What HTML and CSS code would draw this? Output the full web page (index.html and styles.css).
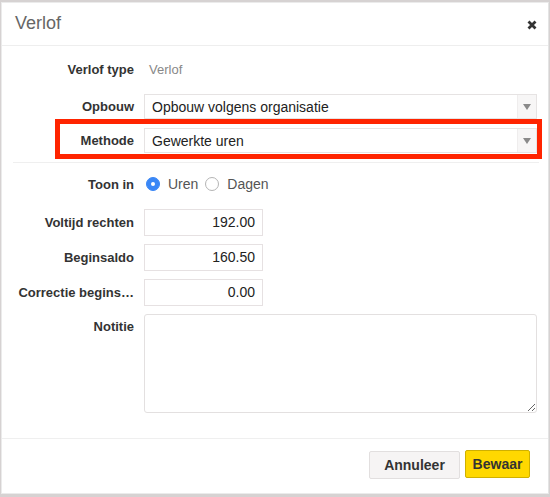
FILE: index.html
```html
<!DOCTYPE html>
<html>
<head>
<meta charset="utf-8">
<link rel="stylesheet" href="styles.css">
</head>
<body>
<div class="modal">
  <div class="header">
    <span class="title">Verlof</span>
    <svg class="close" width="10" height="10" viewBox="0 0 10 10"><path d="M1.5 1.5 L8.5 8.5 M8.5 1.5 L1.5 8.5" stroke="#333" stroke-width="2.8" stroke-linecap="butt"/></svg>
  </div>
  <div class="body">
    <div class="row r-type">
      <div class="label">Verlof type</div>
      <div class="value">Verlof</div>
    </div>
    <div class="row r-opbouw">
      <div class="label">Opbouw</div>
      <div class="select"><span class="sel-text">Opbouw volgens organisatie</span><span class="arrow"><span class="tri"></span></span></div>
    </div>
    <div class="row r-methode">
      <div class="label">Methode</div>
      <div class="select"><span class="sel-text">Gewerkte uren</span><span class="arrow"><span class="tri"></span></span></div>
    </div>
    <div class="sep"></div>
    <div class="row r-toon">
      <div class="label">Toon in</div>
      <div class="radios">
        <span class="radio checked"></span><span class="rlabel">Uren</span>
        <span class="radio"></span><span class="rlabel">Dagen</span>
      </div>
    </div>
    <div class="row r-num first">
      <div class="label">Voltijd rechten</div>
      <div class="input">192.00</div>
    </div>
    <div class="row r-num">
      <div class="label">Beginsaldo</div>
      <div class="input">160.50</div>
    </div>
    <div class="row r-num">
      <div class="label" title="Correctie beginsaldo">Correctie begins…</div>
      <div class="input">0.00</div>
    </div>
    <div class="row r-note">
      <div class="label">Notitie</div>
      <textarea class="textarea"></textarea>
    </div>
  </div>
  <div class="footer">
    <button class="btn cancel">Annuleer</button>
    <button class="btn save">Bewaar</button>
  </div>
  <div class="highlight"></div>
</div>
</body>
</html>
```
FILE: styles.css
```css
html, body {
  margin: 0;
  padding: 0;
}
body {
  background: #d6d2d2;
  width: 550px;
  height: 497px;
  overflow: hidden;
  font-family: "Liberation Sans", Arial, sans-serif;
  color: #333;
}
.modal {
  position: relative;
  box-sizing: border-box;
  width: 548px;
  height: 492px;
  margin: 2px 0 0 1px;
  background: #fff;
  border: 1px solid #ebebeb;
  border-right-color: #e4e4e4;
}
.header {
  height: 42px;
  border-bottom: 1px solid #eeeeee;
  display: flex;
  align-items: center;
  justify-content: space-between;
  padding: 0 11px 0 13px;
}
.title {
  font-size: 18px;
  color: #666;
  margin-top: -1px;
}
.close {
  display: block;
  margin-top: 1px;
}
.body {
  padding: 10px 11px 25px 15px;
}
.row {
  display: flex;
  align-items: center;
}
.label {
  width: 117px;
  flex: none;
  text-align: right;
  font-weight: bold;
  font-size: 13px;
  color: #333;
  margin-right: 10px;
  line-height: 25px;
  white-space: nowrap;
}
.r-type {
  height: 27px;
}
.value {
  font-size: 13px;
  color: #888;
  padding-left: 5px;
}
.r-opbouw {
  margin-top: 11px;
  height: 25px;
}
.r-methode {
  margin-top: 9px;
  height: 25px;
}
.select {
  flex: 1;
  height: 25px;
  box-sizing: border-box;
  border: 1px solid #e6e3e3;
  display: flex;
  align-items: center;
  background: #fff;
}
.sel-text {
  flex: 1;
  font-size: 14px;
  color: #222;
  padding-left: 7px;
}
.arrow {
  width: 18px;
  height: 100%;
  background: #f7f6f6;
  border-left: 1px solid #efeded;
  display: flex;
  align-items: center;
  justify-content: center;
}
.tri {
  width: 0;
  height: 0;
  border-left: 4px solid transparent;
  border-right: 4px solid transparent;
  border-top: 6px solid #8a8a8a;
}
.sep {
  height: 1px;
  background: #efefef;
  margin: 9px -2px 0 -4px;
}
.r-toon {
  margin-top: 8px;
  height: 26px;
}
.radios {
  display: flex;
  align-items: center;
  padding-left: 2px;
}
.radio {
  width: 14px;
  height: 14px;
  box-sizing: border-box;
  border-radius: 50%;
  border: 1px solid #b4b4b4;
  background: #fff;
  display: inline-block;
}
.radio.checked {
  background: #3a87f6;
  border-color: #3a87f6;
  position: relative;
}
.radio.checked::after {
  content: "";
  position: absolute;
  left: 4px;
  top: 4px;
  width: 4px;
  height: 4px;
  border-radius: 50%;
  background: #fff;
}
.rlabel {
  font-size: 14px;
  color: #555;
  margin-left: 8px;
  margin-right: 7px;
}
.r-num {
  margin-top: 8px;
  height: 27px;
}
.r-num.first {
  margin-top: 12px;
}
.input {
  width: 119px;
  height: 27px;
  box-sizing: border-box;
  border: 1px solid #e6e1e2;
  font-size: 14px;
  color: #222;
  text-align: right;
  padding-right: 7px;
  line-height: 25px;
}
.r-note {
  margin-top: 8px;
  align-items: flex-start;
}
.r-note .label {
  line-height: 26px;
}
.textarea {
  flex: 1;
  height: 99px;
  box-sizing: border-box;
  border: 1px solid #e3e0e0;
  border-radius: 3px;
  margin: 0;
  padding: 0;
  resize: both;
  font-family: inherit;
  outline: none;
}
.footer {
  border-top: 1px solid #efefef;
  display: flex;
  justify-content: flex-end;
  align-items: flex-start;
  padding: 11px 18px 0 0;
}
.btn {
  font-family: "Liberation Sans", Arial, sans-serif;
  font-weight: bold;
  font-size: 14px;
  color: #333;
  height: 28px;
  box-sizing: border-box;
  border-radius: 2px;
  padding: 0;
  margin: 0;
}
.cancel {
  width: 91px;
  background: #f6f4f4;
  border: 1px solid #e2dfdf;
  margin-right: 5px;
  margin-top: 1px;
}
.save {
  width: 65px;
  background: #ffd800;
  border: 1px solid #cfb000;
}
.highlight {
  position: absolute;
  left: 53px;
  top: 116px;
  width: 487px;
  height: 40px;
  box-sizing: border-box;
  border: 5px solid #ff2400;
}
```
